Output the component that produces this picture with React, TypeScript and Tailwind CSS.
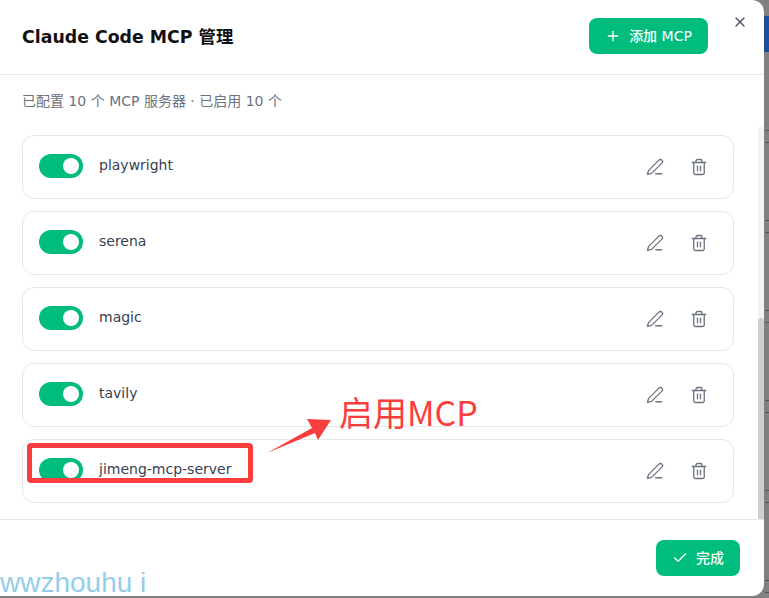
import { Check, PenLine, Plus, Trash2, X } from "lucide-react";

const SERVERS = ["playwright", "serena", "magic", "tavily", "jimeng-mcp-server"];

function ServerRow({ name }: { name: string }) {
  return (
    <div className="flex h-16 items-start rounded-xl border border-[#e5e7eb] bg-white pl-4 pr-[25px]">
      <div className="mt-[18px] flex h-6 w-11 items-center justify-end rounded-full bg-[#00bd7e] pr-1">
        <span className="size-4 rounded-full bg-white"></span>
      </div>
      <span className="ml-4 mt-[19px] text-sm leading-5 text-[#374151]">{name}</span>
      <div className="ml-auto mt-[22px] flex items-center gap-[26px] text-[#6b7280]">
        <PenLine size={18} strokeWidth={1.75} />
        <Trash2 size={18} strokeWidth={1.75} />
      </div>
    </div>
  );
}

export default function App() {
  return (
    <div className="relative h-[598px] w-[769px] overflow-hidden bg-[#808080] font-['DejaVu_Sans','Noto_Sans_CJK_SC',sans-serif]">
      {/* page behind the dialog, only a sliver shows on the right */}
      <div className="absolute left-[764px] top-[16px] h-[36px] w-[5px] bg-[#1c4f9c]"></div>
      <div className="absolute left-[765px] top-[130px] h-[13px] w-[4px] border-y border-[#555555]"></div>
      <div className="absolute left-[765px] top-[220px] h-[13px] w-[4px] border-y border-[#555555]"></div>
      <div className="absolute left-[765px] top-[310px] h-[13px] w-[4px] border-y border-[#555555]"></div>
      <div className="absolute left-[765px] top-[400px] h-[13px] w-[4px] border-y border-[#555555]"></div>
      <div className="absolute left-[765px] top-[490px] h-[13px] w-[4px] border-y border-[#555555]"></div>
      <div className="absolute left-[765px] top-[580px] h-[13px] w-[4px] border-y border-[#555555]"></div>

      <div className="relative flex h-[596px] w-[764px] flex-col rounded-br-xl rounded-tr-xl bg-white">
        <header className="relative flex h-[75px] shrink-0 items-start justify-between border-b border-[#e5e7eb] pl-[22px] pr-[56px] pt-[18px]">
          <h1 className="mt-[7px] text-[17.35px] font-semibold leading-6 text-[#111111]">Claude Code MCP 管理</h1>
          <button className="flex h-9 w-[119px] items-center justify-center gap-2 rounded-lg bg-[#00bd7e] text-sm font-medium text-white">
            <Plus size={16} />
            添加 MCP
          </button>
          <X size={16} className="absolute right-4 top-[14px] text-[#4b5563]" />
        </header>

        <div className="relative min-h-0 flex-1 overflow-hidden">
          <p className="ml-[22px] mt-4 text-sm leading-5 text-[#6b7280]">已配置 10 个 MCP 服务器 · 已启用 10 个</p>
          <div className="ml-[22px] mt-6 flex w-[712px] flex-col gap-3">
            {SERVERS.map((s) => (
              <ServerRow key={s} name={s} />
            ))}
          </div>
          <div className="absolute bottom-0 right-0 top-[52px] w-[6px] bg-[#f3f3f3]">
            <div className="mt-[191px] h-[202px] w-full rounded-full bg-[#cdced2]"></div>
          </div>
        </div>

        <footer className="flex h-[77px] shrink-0 items-start justify-end border-t border-[#e5e7eb] pr-6 pt-5">
          <button className="flex h-9 w-[84px] items-center justify-center gap-2 rounded-lg bg-[#00bd7e] text-sm font-medium text-white">
            <Check size={16} />
            完成
          </button>
        </footer>
      </div>

      {/* annotation drawn over the screenshot */}
      <div className="absolute left-[27px] top-[443px] h-[40px] w-[226px] rounded-[4px] border-[5px] border-[#fa3e3e]"></div>
      <svg className="absolute left-[262px] top-[414px]" width="72" height="44" viewBox="0 0 72 44">
        <path d="M5 39 L50 14 L45 5 L69 6 L56 26 L53 19 Z" fill="#fa3e3e" />
      </svg>
      <span className="absolute left-[339px] top-[390px] font-['Noto_Sans_CJK_SC',sans-serif] text-[34px] leading-[44px] text-[#fa3e3e]">启用MCP</span>
      <span className="absolute left-0 top-[565px] font-['Liberation_Sans',sans-serif] text-[28px] leading-9 text-[#93cdea]">wwzhouhu i</span>
    </div>
  );
}
